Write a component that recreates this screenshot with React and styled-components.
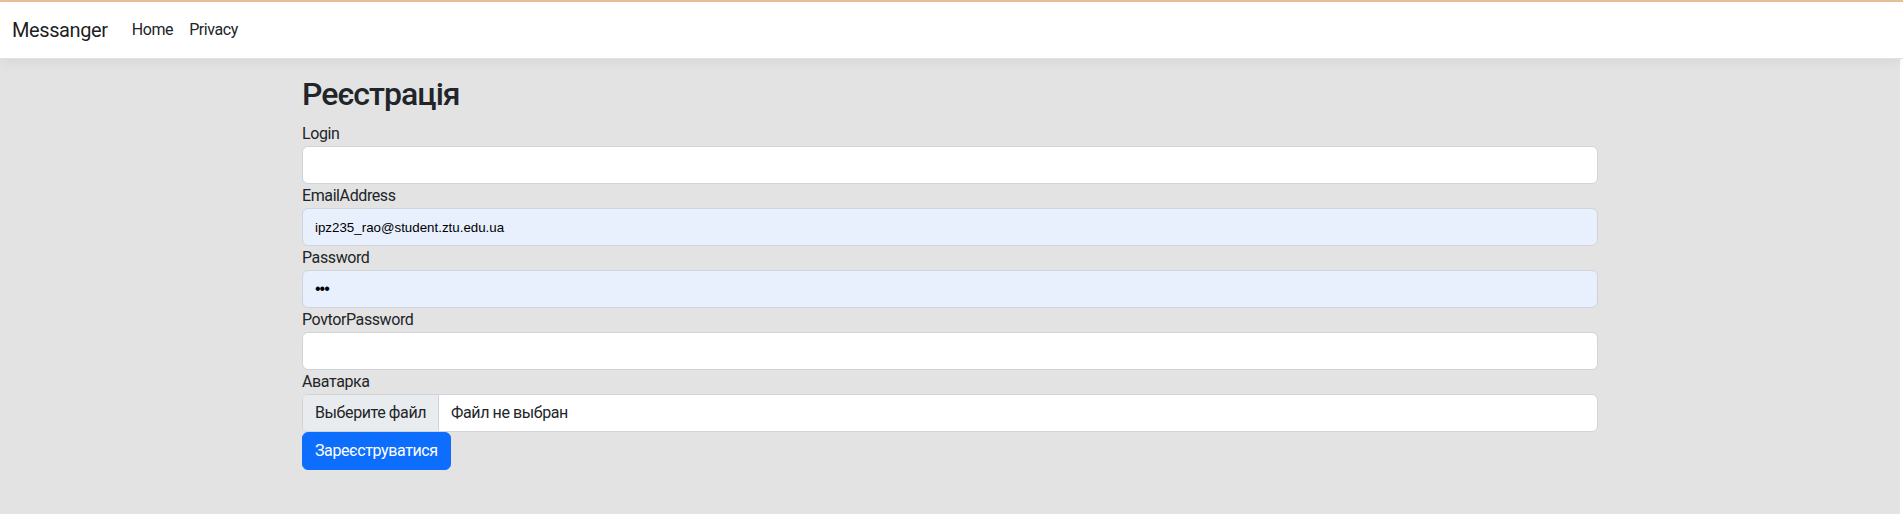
import React from "react";
import styled, { createGlobalStyle } from "styled-components";

const GlobalStyle = createGlobalStyle`
  html, body { margin: 0; padding: 0; background: #ffffff; }
  body {
    font-family: Roboto, "Noto Sans", "Liberation Sans", Arial, sans-serif;
    font-size: 16px;
    line-height: 1.5;
    color: #212529;
    letter-spacing: -0.025em;
  }
  *, *::before, *::after { box-sizing: border-box; }
`;

const Page = styled.div`
  display: flex;
  flex-direction: column;
  min-height: 100vh;
  border-top: 2px solid #e8c096;
`;

const Navbar = styled.header`
  display: flex;
  align-items: center;
  padding: 8px 12px;
  background: #ffffff;
  border-bottom: 1px solid #dee2e6;
  box-shadow: 0 4px 12px rgba(0, 0, 0, 0.05);
  position: relative;
  z-index: 1;
`;

const Brand = styled.a`
  font-size: 20px;
  line-height: 30px;
  padding: 5px 0;
  margin-right: 16px;
  color: rgba(0, 0, 0, 0.9);
  text-decoration: none;
`;

const NavList = styled.nav`
  display: flex;
`;

const NavLink = styled.a`
  padding: 8px;
  line-height: 24px;
  color: #212529;
  text-decoration: none;
`;

const Main = styled.main`
  flex: 1;
  background: #e3e3e3;
  margin-right: 3px;
  padding: 16px 0 16px;
`;

const Container = styled.div`
  max-width: 1320px;
  margin: 0 auto;
  padding: 0 12px;
`;

const Title = styled.h2`
  margin: 0 0 9px;
  font-size: 32px;
  font-weight: 500;
  line-height: 1.2;
  color: #212529;
  letter-spacing: -0.03em;
`;

const Form = styled.form`
  display: flex;
  flex-direction: column;
`;

const Label = styled.label`
  display: block;
  line-height: 24px;
`;

const Input = styled.input`
  display: block;
  width: 100%;
  height: 38px;
  padding: 6px 12px;
  border: 1px solid #ced4da;
  border-radius: 6px;
  background: ${(p) => (p.$filled ? "#e8f0fe" : "#ffffff")};
  font-family: "Liberation Sans", Arial, sans-serif;
  font-size: ${(p) => (p.$masked ? "16px" : "13.33px")};
  letter-spacing: ${(p) => (p.$masked ? "-1px" : "0")};
  color: #000000;
  outline: none;
`;

const FileBox = styled.div`
  display: flex;
  height: 38px;
  border: 1px solid #ced4da;
  border-radius: 6px;
  background: #ffffff;
  overflow: hidden;
`;

const FileButton = styled.span`
  display: flex;
  align-items: center;
  padding: 0 12px;
  background: #e9ecef;
  border-right: 1px solid #ced4da;
  color: #212529;
`;

const FileName = styled.span`
  display: flex;
  align-items: center;
  padding: 0 12px;
  color: #212529;
`;

const SubmitButton = styled.button`
  align-self: flex-start;
  height: 38px;
  padding: 6px 12px;
  border: 1px solid #0d6efd;
  border-radius: 6px;
  background: #0d6efd;
  color: #ffffff;
  font-family: inherit;
  font-size: 16px;
  line-height: 24px;
  letter-spacing: inherit;
  cursor: pointer;
`;

const fields = [
  { label: "Login", value: "" },
  { label: "EmailAddress", value: "ipz235_rao@student.ztu.edu.ua", filled: true },
  { label: "Password", value: "•••", filled: true, masked: true },
  { label: "PovtorPassword", value: "" },
];

export default function App() {
  return (
    <>
      <GlobalStyle />
      <Page>
        <Navbar>
          <Brand href="#">Messanger</Brand>
          <NavList>
            <NavLink href="#">Home</NavLink>
            <NavLink href="#">Privacy</NavLink>
          </NavList>
        </Navbar>
        <Main>
          <Container>
            <Title>Реєстрація</Title>
            <Form onSubmit={(e) => e.preventDefault()}>
              {fields.map((f) => (
                <React.Fragment key={f.label}>
                  <Label>{f.label}</Label>
                  <Input
                    type="text"
                    defaultValue={f.value}
                    $filled={f.filled}
                    $masked={f.masked}
                    readOnly
                  />
                </React.Fragment>
              ))}
              <Label>Аватарка</Label>
              <FileBox>
                <FileButton>Выберите файл</FileButton>
                <FileName>Файл не выбран</FileName>
              </FileBox>
              <SubmitButton type="submit">Зареєструватися</SubmitButton>
            </Form>
          </Container>
        </Main>
      </Page>
    </>
  );
}
